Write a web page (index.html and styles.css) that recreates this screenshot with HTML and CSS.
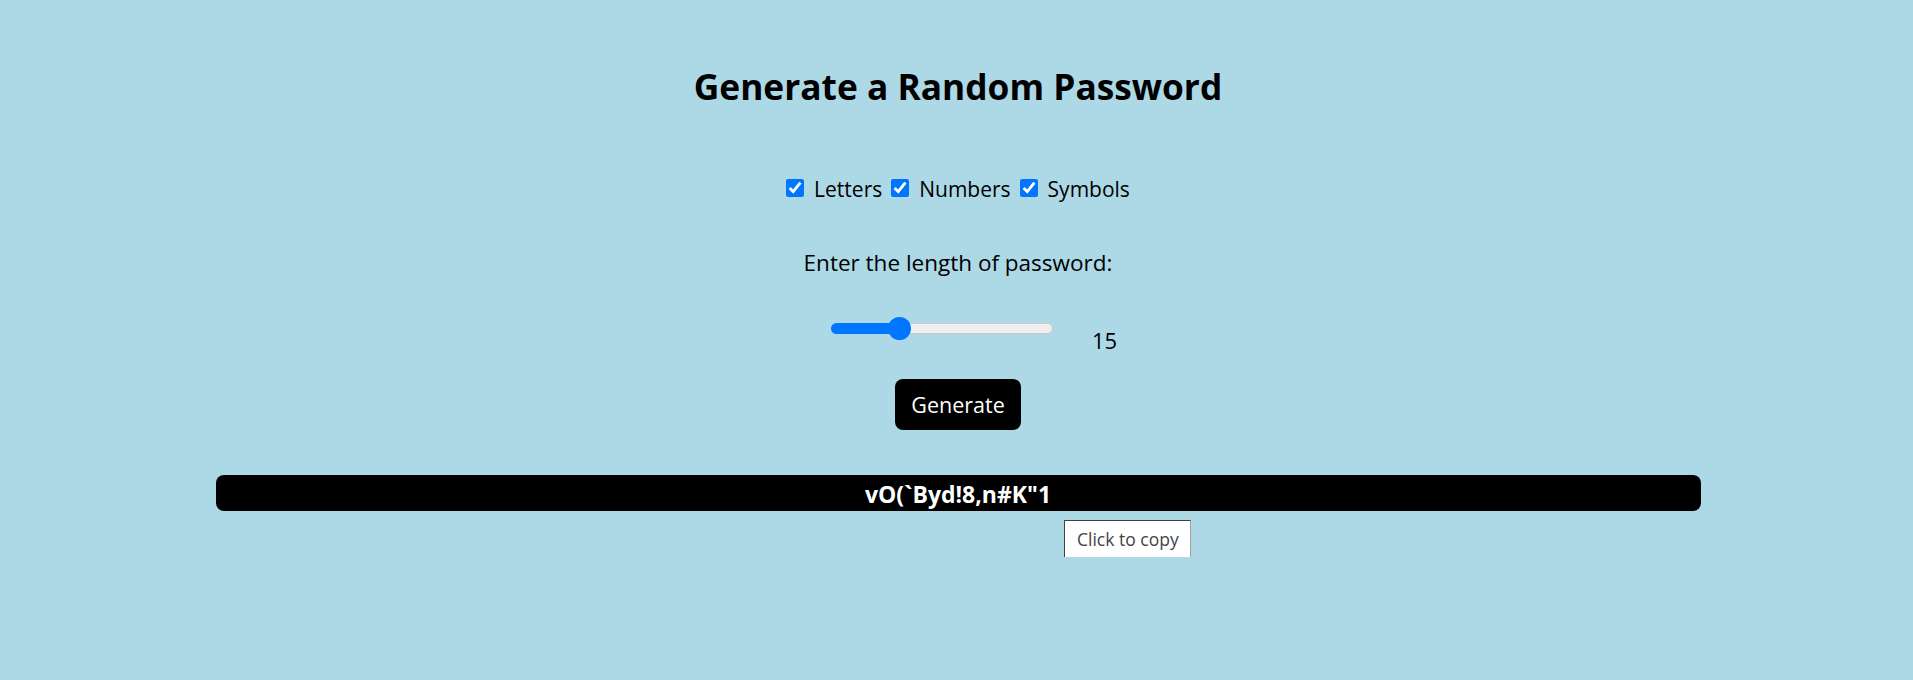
FILE: index.html
```html
<!DOCTYPE html>
<html lang="en">
<head>
<meta charset="utf-8">
<title>Random Password Generator</title>
<link rel="stylesheet" href="styles.css">
</head>
<body>
<main class="app">
  <h1 class="title">Generate a Random Password</h1>
  <div class="options"><label class="opt"><input type="checkbox" checked>Letters</label><label class="opt"><input type="checkbox" checked>Numbers</label><label class="opt"><input type="checkbox" checked>Symbols</label></div>
  <p class="prompt">Enter the length of password:</p>
  <div class="length-row">
    <input class="slider" type="range" min="1" max="50" value="15" style="--fill: 69px">
    <span class="length-value">15</span>
  </div>
  <button class="btn" type="button">Generate</button>
  <div class="result">
    <div class="password">vO(`Byd!8,n#K"1</div>
    <div class="tooltip">Click to copy</div>
  </div>
</main>
</body>
</html>
```
FILE: styles.css
```css
html, body {
  margin: 0;
  padding: 0;
}
body {
  background: #add8e6;
  color: #000;
  font-family: "Open Sans", "Noto Sans", sans-serif;
  height: 680px;
  overflow: hidden;
}
.app {
  display: flex;
  flex-direction: column;
  align-items: center;
  padding-top: 68px;
  padding-left: 3px;
}
.title {
  margin: 0;
  font-size: 35.3px;
  line-height: 36px;
  font-weight: 700;
}
.options {
  margin-top: 75px;
  font-size: 21px;
  line-height: 21px;
  text-align: center;
}
.opt + .opt {
  margin-left: 9px;
}
.opt input {
  width: 18px;
  height: 18px;
  margin: 0 10px 2px 0;
  vertical-align: baseline;
  accent-color: #0075ff;
}
.prompt {
  margin: 52px 0 0;
  font-size: 22.5px;
  line-height: 22.5px;
}
.length-row {
  display: flex;
  align-items: flex-start;
  margin-top: 42.5px;
  padding-left: 32px;
}
.slider {
  -webkit-appearance: none;
  appearance: none;
  width: 222px;
  height: 23px;
  margin: 0 39px 0 0;
  background: transparent;
}
.slider::-webkit-slider-runnable-track {
  box-sizing: border-box;
  height: 11px;
  border: 1px solid transparent;
  border-radius: 6px;
  background:
    linear-gradient(#0075ff, #0075ff) border-box 0 0 / var(--fill) 100% no-repeat,
    linear-gradient(#efefef, #efefef) padding-box,
    #c9c9c9 border-box;
}
.slider::-webkit-slider-thumb {
  -webkit-appearance: none;
  appearance: none;
  width: 23px;
  height: 23px;
  margin-top: -7px;
  border-radius: 50%;
  background: #0075ff;
  border: none;
}
.length-value {
  margin-top: 11.5px;
  font-size: 22px;
  line-height: 22px;
}
.btn {
  margin-top: 28.5px;
  height: 51px;
  padding: 0 16px;
  border: none;
  border-radius: 8px;
  background: #000;
  color: #fff;
  font-family: inherit;
  font-size: 21.5px;
  line-height: 51px;
}
.result {
  position: relative;
  margin-top: 45px;
  width: 1485px;
}
.password {
  box-sizing: border-box;
  height: 36px;
  padding-top: 2px;
  border-radius: 8px;
  background: #000;
  color: #fff;
  font-size: 23px;
  line-height: 34px;
  font-weight: 700;
  text-align: center;
}
.tooltip {
  position: absolute;
  top: 45px;
  left: 50%;
  margin-left: 106px;
  box-sizing: border-box;
  width: 127px;
  height: 37px;
  padding: 0 0 0 12px;
  background: #fff;
  border: 1px solid #3a4246;
  border-right-color: #a0a0a0;
  border-bottom: none;
  color: #444;
  font-size: 17.5px;
  line-height: 36px;
  white-space: nowrap;
}
```
